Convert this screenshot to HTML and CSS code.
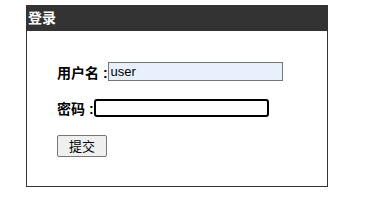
FILE: index.html
```html
<!DOCTYPE html>
<html lang="zh-CN">
<head>
    <meta charset="UTF-8">
    <title>登录</title>
    <link rel="stylesheet" href="styles.css">
</head>
<body>
    <div class="login">
        <h3 class="login-title">登录</h3>
        <form class="login-form">
            <div class="row">
                <label for="username">用户名 :</label><input type="text" id="username" class="input-field filled" value="user">
            </div>
            <div class="row">
                <label for="password">密码 :</label><input type="password" id="password" class="input-field focused">
            </div>
            <div class="row">
                <button type="button" class="submit">提交</button>
            </div>
        </form>
    </div>
</body>
</html>
```

FILE: styles.css
```css
body {
    margin: 0;
    font-family: "Liberation Sans", "Noto Sans CJK SC", sans-serif;
    font-size: 14px;
    background: #fff;
}
.login {
    width: 300px;
    margin: 5px 0 0 26px;
    border: 1px solid #333;
    border-top: none;
    height: 181px;
}
.login-title {
    margin: 0 -1px;
    height: 26px;
    line-height: 26px;
    padding-left: 2px;
    background: #333;
    color: #fff;
    font-size: 14px;
    font-weight: bold;
}
.login-form {
    padding: 31px 0 0 30px;
}
.row {
    display: flex;
    align-items: center;
    height: 19px;
    margin-bottom: 17px;
}
label {
    font-weight: bold;
    color: #000;
}
.input-field {
    box-sizing: border-box;
    height: 19px;
    padding: 0 2px;
    font-family: "Liberation Sans", sans-serif;
    font-size: 13px;
    outline: none;
}
.filled {
    width: 175px;
    border: 1px solid #767676;
    background: #e8f0fe;
}
.focused {
    width: 175px;
    height: 18px;
    border: 2px solid #000;
    border-radius: 3px;
    background: #fff;
}
.submit {
    margin-top: 4px;
    width: 50px;
    height: 22px;
    padding: 0;
    font-family: "Noto Sans CJK SC", sans-serif;
    font-size: 13px;
    color: #000;
    background: #efefef;
    border: 1px solid #767676;
    border-radius: 2px;
}
```
